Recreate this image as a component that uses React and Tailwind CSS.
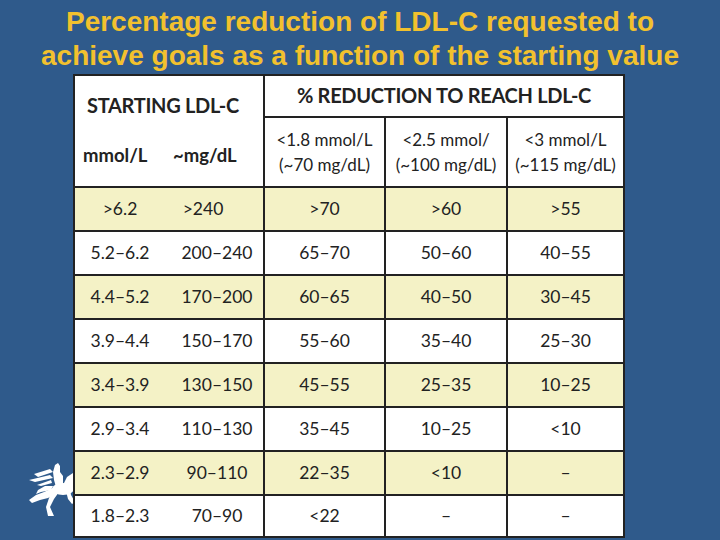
import React from "react";

const rows = [
  [">6.2", ">240", ">70", ">60", ">55"],
  ["5.2–6.2", "200–240", "65–70", "50–60", "40–55"],
  ["4.4–5.2", "170–200", "60–65", "40–50", "30–45"],
  ["3.9–4.4", "150–170", "55–60", "35–40", "25–30"],
  ["3.4–3.9", "130–150", "45–55", "25–35", "10–25"],
  ["2.9–3.4", "110–130", "35–45", "10–25", "<10"],
  ["2.3–2.9", "90–110", "22–35", "<10", "–"],
  ["1.8–2.3", "70–90", "<22", "–", "–"],
];

function Knight() {
  return (
    <svg
      className="absolute left-[20px] top-[455px] w-[60px] h-[70px]"
      viewBox="20 455 60 70"
      fill="#ffffff"
    >
      <path d="M34 474 L50 469 L53 472 L38 477 Z" />
      <path d="M29 480 L50 475 L53 478 L35 482 Z" />
      <path d="M37 485 L51 480 L52 483 L41 486 Z" />
      <path d="M53 472 L55 465 L58 463 L60 466 L60 472 L63 476 L63 485 L56 487 L54 480 Z" />
      <ellipse cx="63" cy="489" rx="11" ry="6" />
      <path d="M63 485 L67 477 L73 473 L76 476 L75 485 L70 490 Z" />
      <path d="M53 486 L45 486 L38 490 L36 494 L41 492 L51 490 Z" />
      <path d="M55 487 L44 492 L36 495 L29 500 L32 503 L40 500 L48 498 L58 492 Z" />
      <path d="M53 489 L49 498 L46 507 L48 516 L54 516 L50 507 L54 499 L59 492 Z" />
      <path d="M66 491 L68 499 L72 504 L75 502 L71 495 L70 490 Z" />
    </svg>
  );
}

export default function App() {
  return (
    <div className="relative w-[720px] h-[540px] overflow-hidden bg-[#2f5a8b]">
      <Knight />
      <h1 className="pt-[5px] text-center text-[28px] leading-[34px] font-bold text-[#f2c12e] font-['Liberation_Sans',Arial,sans-serif]">
        Percentage reduction of LDL-C requested to
        <br />
        achieve goals as a function of the starting value
      </h1>
      <div className="relative z-10 ml-[73px] mt-[1px] w-[552px] bg-[#222222] p-[2px] font-['Lato',sans-serif] text-[#222222]">
        <div className="grid grid-cols-[188px_119px_120px_115px] grid-rows-[40px_68px_repeat(7,42px)_40px] gap-[2px]">
          <div className="row-span-2 bg-white flex flex-col">
            <div className="pl-[12px] pt-[16px] text-[20px] font-bold leading-[26px] tracking-[-0.3px]">
              STARTING LDL-C
            </div>
            <div className="flex pl-[8px] pt-[24px] text-[18.5px] font-bold leading-[26px]">
              <span className="w-[90px]">mmol/L</span>
              <span>~mg/dL</span>
            </div>
          </div>
          <div className="col-span-3 bg-white flex items-center justify-center pb-[2px] text-[20px] font-bold tracking-[-0.3px]">
            % REDUCTION TO REACH LDL-C
          </div>
          {[
            ["<1.8 mmol/L", "(~70 mg/dL)"],
            ["<2.5 mmol/", "(~100 mg/dL)"],
            ["<3 mmol/L", "(~115 mg/dL)"],
          ].map((h, i) => (
            <div
              key={i}
              className="bg-white flex flex-col items-center justify-center text-[17px] leading-[25px]"
            >
              <span>{h[0]}</span>
              <span>{h[1]}</span>
            </div>
          ))}
          {rows.map((r, i) => {
            const bg = i % 2 === 0 ? "bg-[#f4f2c6]" : "bg-white";
            return (
              <React.Fragment key={i}>
                <div className={`${bg} flex items-center text-[17.5px]`}>
                  <span className="w-[90px] text-center">{r[0]}</span>
                  <span className={i === 0 ? "w-[98px] text-center pr-[22px]" : "w-[98px] text-center pl-[6px]"}>
                    {r[1]}
                  </span>
                </div>
                <div className={`${bg} flex items-center justify-center text-[17.5px]`}>{r[2]}</div>
                <div className={`${bg} flex items-center justify-center text-[17.5px]`}>{r[3]}</div>
                <div className={`${bg} flex items-center justify-center text-[17.5px]`}>{r[4]}</div>
              </React.Fragment>
            );
          })}
        </div>
      </div>
    </div>
  );
}
